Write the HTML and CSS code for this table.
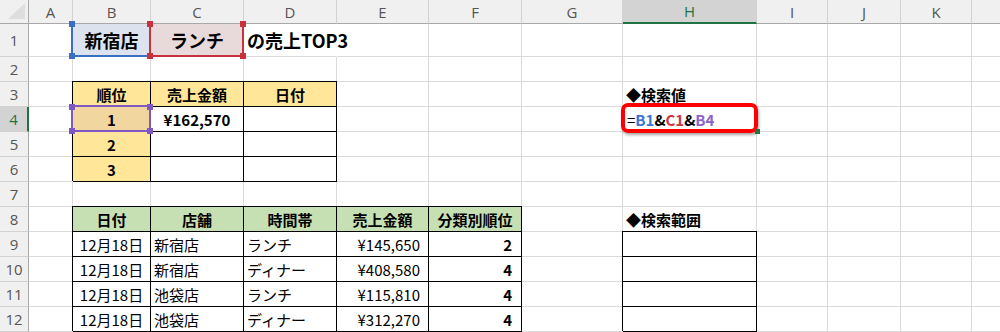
FILE: index.html
```html
<!DOCTYPE html>
<html lang="ja">
<head>
<meta charset="utf-8">
<title>売上TOP3</title>
<link rel="stylesheet" href="styles.css">
</head>
<body>
<div class="sheet">
  <div class="row hdr">
    <div class="c corner"></div>
    <div class="c">A</div><div class="c">B</div><div class="c">C</div><div class="c">D</div><div class="c">E</div><div class="c">F</div><div class="c">G</div><div class="c act">H</div><div class="c">I</div><div class="c">J</div><div class="c">K</div><div class="c"></div>
  </div>
  <div class="row r1">
    <div class="c rh">1</div>
    <div class="c"></div>
    <div class="c ctr big fill-blue ref"><span class="hl hl-blue notop"><i class="q tl"></i><i class="q tr"></i><i class="q bl"></i><i class="q br"></i></span>新宿店</div>
    <div class="c ctr big fill-pink ref"><span class="hl hl-red notop"><i class="q tl"></i><i class="q tr"></i><i class="q bl"></i><i class="q br"></i></span>ランチ</div>
    <div class="c big noline">の売上TOP3</div>
    <div class="c"></div><div class="c"></div><div class="c"></div><div class="c"></div><div class="c"></div><div class="c"></div><div class="c"></div><div class="c"></div>
  </div>
  <div class="row">
    <div class="c rh">2</div>
    <div class="c"></div><div class="c"></div><div class="c"></div><div class="c"></div><div class="c"></div><div class="c"></div><div class="c"></div><div class="c"></div><div class="c"></div><div class="c"></div><div class="c"></div><div class="c"></div>
  </div>
  <div class="row">
    <div class="c rh">3</div>
    <div class="c"></div>
    <div class="c tb gold ctr b">順位</div>
    <div class="c tb gold ctr b">売上金額</div>
    <div class="c tb gold ctr b">日付</div>
    <div class="c"></div><div class="c"></div><div class="c"></div>
    <div class="c b">◆検索値</div>
    <div class="c"></div><div class="c"></div><div class="c"></div><div class="c"></div>
  </div>
  <div class="row">
    <div class="c rh act">4</div>
    <div class="c"></div>
    <div class="c tb tan ctr b ref"><span class="hl hl-purple"><i class="q tl"></i><i class="q tr"></i><i class="q bl"></i><i class="q br"></i></span>1</div>
    <div class="c tb ctr b">¥162,570</div>
    <div class="c tb"></div>
    <div class="c"></div><div class="c"></div><div class="c"></div>
    <div class="c ref formula"><span class="redbox"></span><i class="handle"></i>=<b class="f-blue">B1</b><b>&amp;</b><b class="f-red">C1</b><b>&amp;</b><b class="f-purple">B4</b></div>
    <div class="c"></div><div class="c"></div><div class="c"></div><div class="c"></div>
  </div>
  <div class="row">
    <div class="c rh">5</div>
    <div class="c"></div>
    <div class="c tb gold ctr b">2</div>
    <div class="c tb"></div>
    <div class="c tb"></div>
    <div class="c"></div><div class="c"></div><div class="c"></div><div class="c"></div><div class="c"></div><div class="c"></div><div class="c"></div><div class="c"></div>
  </div>
  <div class="row">
    <div class="c rh">6</div>
    <div class="c"></div>
    <div class="c tb gold ctr b">3</div>
    <div class="c tb"></div>
    <div class="c tb"></div>
    <div class="c"></div><div class="c"></div><div class="c"></div><div class="c"></div><div class="c"></div><div class="c"></div><div class="c"></div><div class="c"></div>
  </div>
  <div class="row">
    <div class="c rh">7</div>
    <div class="c"></div><div class="c"></div><div class="c"></div><div class="c"></div><div class="c"></div><div class="c"></div><div class="c"></div><div class="c"></div><div class="c"></div><div class="c"></div><div class="c"></div><div class="c"></div>
  </div>
  <div class="row">
    <div class="c rh">8</div>
    <div class="c"></div>
    <div class="c tb green ctr b">日付</div>
    <div class="c tb green ctr b">店舗</div>
    <div class="c tb green ctr b">時間帯</div>
    <div class="c tb green ctr b">売上金額</div>
    <div class="c tb green ctr b">分類別順位</div>
    <div class="c"></div>
    <div class="c b">◆検索範囲</div>
    <div class="c"></div><div class="c"></div><div class="c"></div><div class="c"></div>
  </div>
  <div class="row">
    <div class="c rh">9</div>
    <div class="c"></div>
    <div class="c tb ctr">12月18日</div>
    <div class="c tb">新宿店</div>
    <div class="c tb">ランチ</div>
    <div class="c tb rt amt">¥145,650</div>
    <div class="c tb rt b rank">2</div>
    <div class="c"></div>
    <div class="c tb"></div>
    <div class="c"></div><div class="c"></div><div class="c"></div><div class="c"></div>
  </div>
  <div class="row">
    <div class="c rh">10</div>
    <div class="c"></div>
    <div class="c tb ctr">12月18日</div>
    <div class="c tb">新宿店</div>
    <div class="c tb">ディナー</div>
    <div class="c tb rt amt">¥408,580</div>
    <div class="c tb rt b rank">4</div>
    <div class="c"></div>
    <div class="c tb"></div>
    <div class="c"></div><div class="c"></div><div class="c"></div><div class="c"></div>
  </div>
  <div class="row">
    <div class="c rh">11</div>
    <div class="c"></div>
    <div class="c tb ctr">12月18日</div>
    <div class="c tb">池袋店</div>
    <div class="c tb">ランチ</div>
    <div class="c tb rt amt">¥115,810</div>
    <div class="c tb rt b rank">4</div>
    <div class="c"></div>
    <div class="c tb"></div>
    <div class="c"></div><div class="c"></div><div class="c"></div><div class="c"></div>
  </div>
  <div class="row">
    <div class="c rh">12</div>
    <div class="c"></div>
    <div class="c tb ctr">12月18日</div>
    <div class="c tb">池袋店</div>
    <div class="c tb">ディナー</div>
    <div class="c tb rt amt">¥312,270</div>
    <div class="c tb rt b rank">4</div>
    <div class="c"></div>
    <div class="c tb"></div>
    <div class="c"></div><div class="c"></div><div class="c"></div><div class="c"></div>
  </div>
</div>
</body>
</html>
```

FILE: styles.css
```css
html, body {
  margin: 0;
  padding: 0;
  background: #fff;
}

.sheet {
  width: 1000px;
  height: 332px;
  overflow: hidden;
  font-family: "Noto Sans CJK JP", "Noto Sans", sans-serif;
  color: #000;
}

.row {
  display: grid;
  grid-template-columns: 29px 44px 78px 93px 93px 92px 93px 101px 134px 71px 73px 71px 80px;
  height: 25px;
}

.row.hdr { height: 24px; }
.row.r1 { height: 33px; }

.c {
  box-sizing: border-box;
  border-right: 1px solid #dadada;
  border-bottom: 1px solid #dadada;
  display: flex;
  align-items: center;
  padding: 0 3px;
  white-space: nowrap;
  font-size: 15px;
  min-width: 0;
}

/* column header */
.hdr .c {
  background: #f0f0f0;
  border-right: 1px solid #d2d2d2;
  border-bottom: 1px solid #a8a8a8;
  justify-content: center;
  font-family: "Open Sans", "Liberation Sans", sans-serif;
  font-size: 15px;
  color: #555;
  padding: 0;
}

.hdr .c.act {
  background: #d3d3d3;
  border-bottom: 2px solid #217346;
  color: #217346;
}

.hdr .corner {
  position: relative;
  border-right: 1px solid #a8a8a8;
}

.hdr .corner::after {
  content: "";
  position: absolute;
  right: 3px;
  bottom: 4px;
  width: 17px;
  height: 16px;
  background: #dedede;
  clip-path: polygon(100% 0, 100% 100%, 0 100%);
}

/* row header */
.rh {
  background: #f0f0f0;
  border-right: 1px solid #a8a8a8;
  border-bottom: 1px solid #d2d2d2;
  justify-content: center;
  font-family: "Open Sans", "Liberation Sans", sans-serif;
  color: #555;
  padding: 0;
}

.rh.act {
  background: #d3d3d3;
  border-right: 2px solid #217346;
  color: #217346;
}

/* text helpers */
.ctr { justify-content: center; }
.rt { justify-content: flex-end; }
.b { font-weight: 700; }
.big { font-size: 18px; font-weight: 700; }
.noline { border-right-color: transparent; overflow: visible; }
.amt { padding-right: 8px; }
.rank { padding-right: 9px; }

/* fills */
.gold { background: #ffe699; }
.green { background: #c6e0b4; }
.tan { background: #f2d6a0; }
.fill-blue { background: #dce3ee; }
.fill-pink { background: #e8dadb; }

/* black table borders */
.tb {
  border-right-color: #000;
  border-bottom-color: #000;
  box-shadow: -1px -1px 0 #000, 0 -1px 0 #000;
}

/* formula reference highlights */
.ref { position: relative; }

.hl {
  position: absolute;
  left: -2px;
  top: -2px;
  right: -1px;
  bottom: -1px;
  border: 2px solid currentColor;
  z-index: 3;
  pointer-events: none;
}

.hl.notop { border-top-color: transparent; }

.hl-blue { color: #3a6fc4; }
.hl-red { color: #c8323c; z-index: 4; }
.hl-purple { color: #8058c4; }

.q {
  position: absolute;
  width: 6px;
  height: 6px;
  background: currentColor;
}

.q.tl { left: -4px; top: -3px; }
.q.tr { right: -4px; top: -3px; }
.q.bl { left: -4px; bottom: -4px; }
.q.br { right: -4px; bottom: -4px; }

.formula {
  font-weight: 400;
  padding-left: 4px;
}

.formula b { font-weight: 700; }
.f-blue { color: #3b74d1; }
.f-red { color: #d0343e; }
.f-purple { color: #8a63c8; }

.redbox {
  position: absolute;
  left: -2px;
  top: -4px;
  right: -2px;
  bottom: -2px;
  border: 4px solid #f00;
  border-radius: 7px;
  box-shadow: 1px 2px 3px rgba(0, 0, 0, 0.35);
  z-index: 3;
}

.handle {
  position: absolute;
  right: -4px;
  bottom: -3px;
  width: 5px;
  height: 5px;
  background: #217346;
  z-index: 4;
}
```
